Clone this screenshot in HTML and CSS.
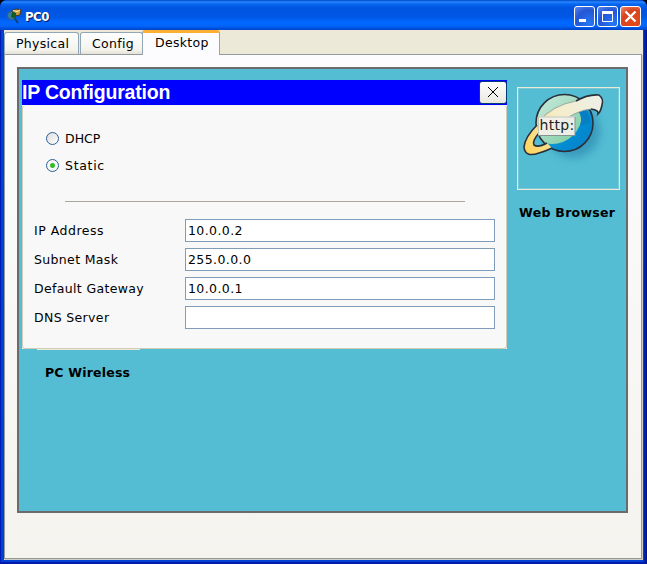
FILE: index.html
```html
<!DOCTYPE html>
<html lang="en">
<head>
<meta charset="utf-8">
<title>PC0</title>
<link rel="stylesheet" href="styles.css">
</head>
<body>
<div class="window">
  <header class="titlebar">
    <svg class="app-icon" width="16" height="16" viewBox="0 0 16 16">
      <path d="M5 3l4-2 5 1-1 5-6 1z" fill="#c99a45" stroke="#4b391b"/>
      <path d="M6 2.500l4 1 3-1.500" fill="none" stroke="#fff0a0"/>
      <circle cx="4.500" cy="7.500" r="4" fill="#397fa0" stroke="#335d7e"/>
      <path d="M5 4l4 1v6l-5-2z" fill="#145c20"/>
      <path d="M8 11l3 4" stroke="#173d70" stroke-width="2"/>
    </svg>
    <h1 class="title">PC0</h1>
    <div class="controls">
      <button class="control" aria-label="Minimize"><svg width="19" height="19"><path d="M4 13.500h7" stroke="#fff" stroke-width="3"/></svg></button>
      <button class="control" aria-label="Maximize"><svg width="19" height="19"><path d="M4.500 5v9.500h10V5" fill="none" stroke="#fff"/><path d="M4 5.500h11" stroke="#fff" stroke-width="3"/></svg></button>
      <button class="control close" aria-label="Close"><svg width="19" height="19"><path d="M4.500 4.500l10 10m0-10l-10 10" stroke="#fff" stroke-width="2.300"/></svg></button>
    </div>
  </header>
  <main class="client">
    <nav class="tabs">
      <span class="tab physical">Physical</span>
      <span class="tab config">Config</span>
      <span class="tab active">Desktop</span>
    </nav>
    <section class="pane">
      <div class="desktop">
        <div class="left">
          <section class="dialog">
            <header class="dialog-head">
              <h2>IP Configuration</h2>
              <button class="dialog-close" aria-label="Close"><svg width="26" height="21"><path d="M8 5l10 10m0-10l-10 10" stroke="#000"/><path d="M12 9h2v2h-2z"/></svg></button>
            </header>
            <div class="dialog-body">
              <div class="radio-row"><span class="radio"></span><span>DHCP</span></div>
              <div class="radio-row"><span class="radio checked"></span><span class="static">Static</span></div>
              <div class="rule"></div>
              <div class="fields">
                <span class="label-ip">IP Address</span><div class="field">10.0.0.2</div>
                <span class="label">Subnet Mask</span><div class="field">255.0.0.0</div>
                <span class="label">Default Gateway</span><div class="field">10.0.0.1</div>
                <span class="label">DNS Server</span><div class="field"></div>
              </div>
            </div>
          </section>
          <div class="tile-edge"></div>
          <div class="caption wireless">PC Wireless</div>
        </div>
        <div class="browser">
          <div class="tile">
            <svg width="101" height="101" viewBox="0 0 101 101">
              <defs>
                <linearGradient id="sea" x1="0" y1="0" x2="1" y2="1"><stop offset=".3" stop-color="#35aacb"/><stop offset=".7" stop-color="#008bd2"/><stop offset="1" stop-color="#167bc0"/></linearGradient>
                <linearGradient id="land" x1="0" y1="0" x2="1" y2="1"><stop stop-color="#e0f3f1"/><stop offset="1" stop-color="#7acb9e"/></linearGradient>
                <linearGradient id="ring" gradientUnits="userSpaceOnUse" x1="8" y1="62" x2="82" y2="10"><stop stop-color="#ffd45c"/><stop offset=".5" stop-color="#f5edc8"/><stop offset="1" stop-color="#edf0e9"/></linearGradient>
                <filter id="soft" x="-30%" y="-30%" width="160%" height="160%"><feGaussianBlur stdDeviation="4"/></filter>
                <clipPath id="ball"><circle cx="46.500" cy="35" r="28.500"/></clipPath>
              </defs>
              <circle cx="55" cy="43" r="27" fill="#247ea7" opacity=".55" filter="url(#soft)"/>
              <circle cx="46.500" cy="35" r="28.500" fill="url(#sea)"/>
              <g clip-path="url(#ball)">
                <circle cx="34" cy="26" r="30" fill="url(#land)"/>
                <path d="M64 18q8 6 8 17l-10 3q3-9-2-15z" fill="#087fc2"/>
              </g>
              <circle cx="46.500" cy="35" r="28.500" fill="none" stroke="#293039" stroke-width="1.600"/>
              <path d="M19 37Q7 49 6 59Q7 70 21 65Q28 63 34 60L29 55Q20 60 16 57Q14 53 21 45z" fill="url(#ring)"/>
              <path d="M19 37Q7 49 6 59Q7 70 21 65Q28 63 34 60M29 55Q20 60 16 57Q14 53 21 45" fill="none" stroke="#293039" stroke-width="1.600"/>
              <path d="M20 34Q35 17 58 13Q70 6 81 7Q86 11 84 17Q83 23 80 26Q81 22 73 21Q59 22 38 37L22 46z" fill="url(#ring)"/>
              <path d="M58 13Q70 6 81 7Q86 11 84 17Q83 23 80 26Q81 22 73 21" fill="none" stroke="#293039" stroke-width="1.600"/>
              <path d="M20 34Q35 17 58 13M73 21Q59 22 38 37" fill="none" stroke="#8b9690" stroke-width=".8"/>
              <rect x="20" y="28.500" width="37" height="19" fill="#f1f0e9" opacity=".94"/>
              <path d="M20.500 47V29H57" fill="none" stroke="#bfc7c0"/><path d="M20 47.500h37V29" fill="none" stroke="#839493"/>
              <text x="21.500" y="41.500" class="http">http:</text>
            </svg>
          </div>
          <div class="caption web">Web Browser</div>
        </div>
      </div>
    </section>
  </main>
</div>
</body>
</html>
```
FILE: styles.css
```css
* { box-sizing: border-box; }
body { margin: 0; width: 647px; height: 564px; overflow: hidden; background: #000; color: #000; font: 12.5px/16px "DejaVu Sans", sans-serif; }
button { padding: 0; font: inherit; }
svg { display: block; flex: none; }
h1, h2 { margin: 0; }
.window { width: 647px; height: 564px; background: #0041d5; padding: 0 4px 4px; border-radius: 7px 7px 0 0; box-shadow: inset 1px 0 #001bb4, inset -1px 0 #00138c, inset 0 -2px #001ba9, inset -3px 0 #0020ae; }
.titlebar { height: 30px; margin: 0 -4px; padding: 3px 6px 0 7px; display: flex; align-items: center; border-radius: 7px 7px 0 0; background: linear-gradient(#0048c4 0, #2786ff 2px, #0766ef 4px, #0055df 8px, #0057e5 17px, #0268ff 22px, #0266fb 26px, #0042c8 30px); }
.app-icon { margin-top: -1px; }
.title { font: bold 13px/18px "DejaVu Sans Condensed", "DejaVu Sans", sans-serif; color: #fff; text-shadow: 1px 1px #001d70; margin-left: 2px; letter-spacing: -.5px; }
.controls { display: flex; gap: 2px; margin-left: auto; }
.control { width: 21px; height: 21px; border: 1px solid #fff; border-radius: 3px; background: radial-gradient(circle at 75% 85%, #2678f4, #2456d5 60%, #5d88ee); }
.close { background: radial-gradient(circle at 70% 80%, #e54b19, #d84420 60%, #ed8c70); }
.client { height: 530px; background: #ece9d8; padding-right: 1px; }
.tabs { height: 24px; display: flex; align-items: flex-end; }
.tab { height: 22px; border: 1px solid #91a7b4; border-bottom: 0; border-radius: 3px 3px 0 0; background: linear-gradient(#fff, #f4f3ed 80%, #e5e1d8); line-height: 22px; letter-spacing: .3px; white-space: nowrap; }
.physical { width: 75px; padding-left: 11px; }
.config { width: 63px; margin-left: 1px; padding-left: 11px; }
.active { position: relative; z-index: 1; width: 78px; height: 25px; margin: 0 0 -1px -1px; padding-left: 12px; background: #fcfcfe; border-top: 3px solid #fbb034; line-height: 20px; }
.pane { height: 505px; border: 1px solid #919b9c; background: linear-gradient(#fcfcfe, #f4f3ee); padding: 12px; box-shadow: 1px 1px #d0cec0; }
.desktop { width: 611px; height: 446px; border: 2px solid #6b6b6b; background: #54bdd4; padding: 11px 6px 0 3px; display: flex; }
.left { width: 485px; }
.dialog { height: 269px; background: #f8f8f8; }
.dialog-head { height: 25px; background: #00f; display: flex; align-items: center; justify-content: space-between; }
.dialog-head h2 { font: bold 19.5px/25px "Liberation Sans", sans-serif; letter-spacing: -.2px; color: #fff; }
.dialog-close { width: 28px; height: 23px; border: 1px solid #003c74; border-radius: 3px; background: linear-gradient(#fff, #e9e7df); }
.dialog-body { height: 244px; background: #f8f8f8; border: 1px solid #d0cdb5; border-top-color: #f4f3ec; border-radius: 3px; padding: 19px 11px 0; }
.radio-row { display: flex; align-items: center; height: 27px; gap: 6px; padding-left: 12px; }
.radio { width: 13px; height: 13px; border: 1px solid #28609a; border-radius: 50%; background: linear-gradient(135deg, #ddd, #fff); }
.checked { background: radial-gradient(circle, #35ba2b 0 2px, #f6f6f3 3px); }
.static { letter-spacing: .7px; }
.rule { width: 400px; height: 1px; margin: 22px 0 17px 31px; background: #aca899; }
.fields { display: grid; grid-template-columns: 151px 310px; grid-auto-rows: 23px; row-gap: 6px; align-items: center; }
.label { letter-spacing: .35px; }
.label-ip { letter-spacing: .5px; }
.field { height: 23px; border: 1px solid #7f9db9; background: #fff; padding: 0 2px; line-height: 21px; letter-spacing: .4px; }
.tile-edge { width: 103px; height: 1px; margin-left: 15px; background: #ece9d8; }
.caption { font-weight: bold; white-space: nowrap; letter-spacing: .3px; }
.wireless { margin: 15px 0 0 23px; letter-spacing: .2px; }
.browser { width: 103px; margin: 7px 0 0 10px; }
.tile { width: 103px; height: 103px; border: 1px solid #ece9d8; outline: 1px solid rgba(236, 233, 216, .25); outline-offset: -2px; }
.web { margin: 15px 0 0 2px; }
.http { font: 14px "DejaVu Sans", sans-serif; letter-spacing: .3px; fill: #222; }
```
